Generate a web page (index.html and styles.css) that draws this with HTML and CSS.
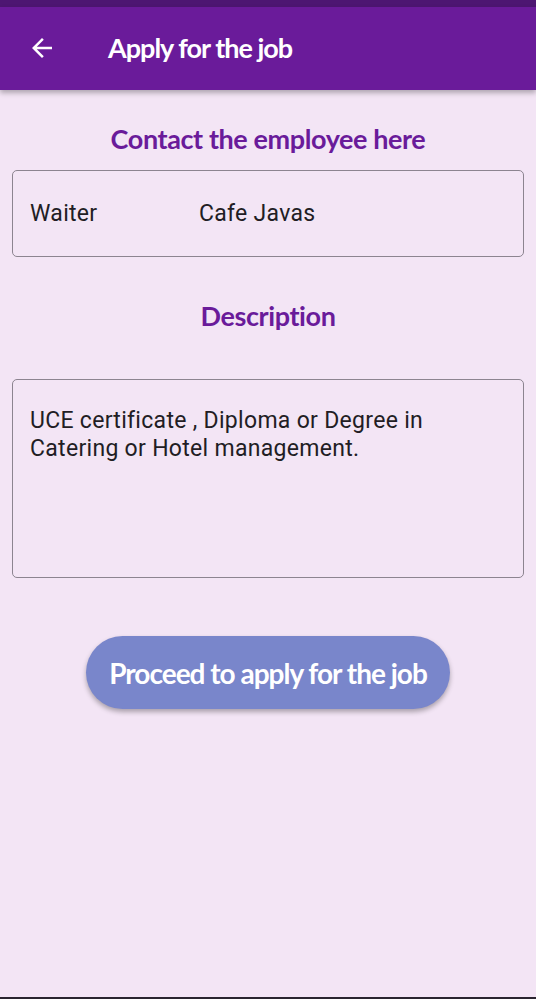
FILE: index.html
```html
<!DOCTYPE html>
<html>
<head>
<meta charset="utf-8">
<link rel="stylesheet" href="styles.css">
</head>
<body>
<div class="status"></div>
<header class="appbar">
  <svg class="back" viewBox="0 0 24 24" width="30" height="30"><path d="M20 11H7.83l5.59-5.59L12 4l-8 8 8 8 1.41-1.41L7.83 13H20v-2z" fill="#fff"/></svg>
  <h1 class="title">Apply for the job</h1>
</header>
<main class="content">
  <h2 class="heading first">Contact the employee here</h2>
  <div class="field contact">
    <span class="job">Waiter</span>
    <span class="company">Cafe Javas</span>
  </div>
  <h2 class="heading second">Description</h2>
  <div class="field desc">UCE certificate , Diploma or Degree in Catering or Hotel management.</div>
  <div class="actions">
    <button class="proceed">Proceed to apply for the job</button>
  </div>
</main>
<div class="bottomline"></div>
</body>
</html>
```
FILE: styles.css
```css
html, body {
  margin: 0;
  padding: 0;
}
body {
  width: 536px;
  height: 999px;
  background: #f3e5f5;
  display: flex;
  flex-direction: column;
  overflow: hidden;
  font-family: Roboto, "Liberation Sans", sans-serif;
}
.status {
  height: 7px;
  background: #4d1672;
  flex: none;
}
.appbar {
  height: 83px;
  background: #6a1b9a;
  display: flex;
  align-items: center;
  box-shadow: 0 3px 5px rgba(0,0,0,0.28);
  position: relative;
  z-index: 1;
  flex: none;
}
.back {
  margin-left: 27px;
  margin-top: -2px;
}
.title {
  margin: -3px 0 0 51px;
  color: #fff;
  font-family: Lato, sans-serif;
  font-weight: bold;
  font-size: 27px;
  letter-spacing: -1px;
}
.content {
  flex: 1;
  padding: 0 12px 0 12px;
  display: flex;
  flex-direction: column;
}
.heading {
  margin: 0;
  text-align: center;
  color: #6a1b9a;
  font-family: Lato, sans-serif;
  font-weight: bold;
  font-size: 27px;
  letter-spacing: -0.4px;
  line-height: 36px;
}
.heading.first {
  margin-top: 31px;
  margin-bottom: 13px;
}
.heading.second {
  margin-top: 41px;
  margin-bottom: 45px;
}
.field {
  border: 1px solid #8c8490;
  border-radius: 5px;
  color: #221d24;
  font-size: 23px;
  letter-spacing: 0.3px;
}
.contact {
  height: 85px;
  display: flex;
  align-items: center;
  padding-left: 17px;
}
.job {
  width: 169px;
}
.desc {
  height: 170px;
  padding: 27px 17px 0 17px;
  line-height: 28px;
}
.actions {
  display: flex;
  justify-content: center;
  margin-top: 58px;
}
.proceed {
  width: 364px;
  height: 73px;
  border: none;
  border-radius: 37px;
  background: #7986cb;
  color: #fff;
  font-family: Lato, sans-serif;
  font-weight: bold;
  font-size: 28px;
  letter-spacing: -1px;
  white-space: nowrap;
  box-shadow: 0 3px 5px rgba(0,0,0,0.3);
  padding: 0;
}
.bottomline {
  height: 2px;
  background: #2a2430;
  flex: none;
}
```
